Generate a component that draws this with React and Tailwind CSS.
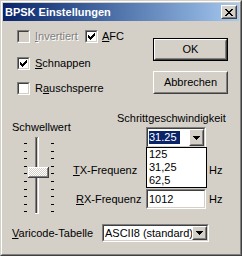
import { useState } from 'react'

const raisedOuter = 'border border-t-white border-l-white border-r-[#404040] border-b-[#404040]'
const raisedInner = 'border border-t-[#d4d0c8] border-l-[#d4d0c8] border-r-[#808080] border-b-[#808080]'
const sunkenOuter = 'border border-t-[#808080] border-l-[#808080] border-r-white border-b-white'
const sunkenInner = 'border border-t-[#404040] border-l-[#404040] border-r-[#d4d0c8] border-b-[#d4d0c8]'

function CheckMark() {
  return (
    <svg width="7" height="7" viewBox="0 0 7 7" shapeRendering="crispEdges">
      <path
        fill="#000"
        d="M6 0h1v1h-1z M5 1h2v1h-2z M0 2h1v1h-1z M4 2h3v1h-3z M0 3h2v1h-2z M3 3h3v1h-3z M0 4h5v1h-5z M1 5h3v1h-3z M2 6h1v1h-1z"
      />
    </svg>
  )
}

function Checkbox({ checked, disabled }) {
  return (
    <div className={`w-[13px] h-[13px] shrink-0 ${sunkenOuter}`}>
      <div className={`w-full h-full flex items-center justify-center ${sunkenInner} ${disabled ? 'bg-[#d4d0c8]' : 'bg-white'}`}>
        {checked && <CheckMark />}
      </div>
    </div>
  )
}

function Arrow() {
  return (
    <svg width="7" height="4" viewBox="0 0 7 4" shapeRendering="crispEdges">
      <path fill="#000" d="M0 0h7v1h-7z M1 1h5v1h-5z M2 2h3v1h-3z M3 3h1v1h-1z" />
    </svg>
  )
}

function Button({ label, isDefault }) {
  const body = (
    <div className={`w-full h-full ${raisedOuter}`}>
      <div className={`w-full h-full flex items-center justify-center ${raisedInner}`}>{label}</div>
    </div>
  )
  if (isDefault) {
    return <div className="w-[75px] h-[23px] border border-black">{body}</div>
  }
  return <div className="w-[75px] h-[23px]">{body}</div>
}

function Combo({ width, height, children, open, items }) {
  return (
    <div className={`relative ${width} ${height} ${sunkenOuter}`}>
      <div className={`w-full h-full flex bg-white ${sunkenInner}`}>
        <div className="flex-1 min-w-0 flex items-center pl-px whitespace-nowrap overflow-hidden">{children}</div>
        <div className={`w-[15px] shrink-0 h-full ${raisedOuter}`}>
          <div className={`w-full h-full flex items-center justify-center bg-[#d4d0c8] ${raisedInner}`}>
            <Arrow />
          </div>
        </div>
      </div>
      {open && (
        <div className="absolute left-[-1px] top-full w-[61px] border border-black bg-white">
          {items.map((it) => (
            <div key={it} className="h-[13px] leading-[13px] pl-[2px]">
              {it}
            </div>
          ))}
        </div>
      )}
    </div>
  )
}

function Field({ value }) {
  return (
    <div className={`w-[60px] h-[20px] ${sunkenOuter}`}>
      <div className={`w-full h-full bg-white flex items-center pl-px ${sunkenInner}`}>{value}</div>
    </div>
  )
}

function Slider() {
  const ticks = []
  for (let i = 0; i < 10; i++) ticks.push(Math.round(9 + i * 7.6))
  return (
    <svg width="40" height="82" viewBox="0 0 40 82" shapeRendering="crispEdges">
      <defs>
        <pattern id="dither" width="2" height="2" patternUnits="userSpaceOnUse">
          <rect width="2" height="2" fill="#d4d0c8" />
          <rect width="1" height="1" fill="#fff" />
          <rect x="1" y="1" width="1" height="1" fill="#fff" />
        </pattern>
      </defs>
      {ticks.map((y) => (
        <g key={y}>
          <rect x="4" y={y} width="3" height="1" fill="#000" />
          <rect x="31" y={y} width="3" height="1" fill="#000" />
        </g>
      ))}
      <rect x="15" y="3" width="1" height="77" fill="#808080" />
      <rect x="16" y="3" width="1" height="77" fill="#404040" />
      <rect x="17" y="3" width="1" height="77" fill="#d4d0c8" />
      <rect x="18" y="3" width="1" height="77" fill="#fff" />
      <rect x="15" y="3" width="3" height="1" fill="#808080" />
      <rect x="15" y="79" width="4" height="1" fill="#fff" />
      <rect x="8" y="33" width="21" height="11" fill="#404040" />
      <rect x="8" y="33" width="20" height="10" fill="#fff" />
      <rect x="9" y="34" width="19" height="9" fill="#808080" />
      <rect x="9" y="34" width="18" height="8" fill="url(#dither)" />
    </svg>
  )
}

export default function App() {
  const [speed] = useState('31.25')

  return (
    <div className="w-[242px] h-[256px] font-['Liberation_Sans',Arial,sans-serif] text-[11px] leading-[13px] text-black border border-t-[#d4d0c8] border-l-[#d4d0c8] border-r-[#404040] border-b-[#404040]">
      <div className="h-full flex flex-col p-px bg-[#d4d0c8] border border-t-white border-l-white border-r-[#808080] border-b-[#808080]">
        <div className="h-[18px] shrink-0 flex items-center pl-[2px] pr-[2px] bg-linear-to-r from-[#0a246a] to-[#a6caf0]">
          <span className="text-white font-bold text-[11px]">BPSK Einstellungen</span>
          <div className={`ml-auto w-[16px] h-[14px] ${raisedOuter}`}>
            <div className={`w-full h-full flex items-center justify-center bg-[#d4d0c8] ${raisedInner}`}>
              <svg width="8" height="7" viewBox="0 0 8 7" shapeRendering="crispEdges">
                <path
                  fill="#000"
                  d="M0 0h2v1h-2z M6 0h2v1h-2z M1 1h2v1h-2z M5 1h2v1h-2z M2 2h4v1h-4z M3 3h2v1h-2z M2 4h4v1h-4z M1 5h2v1h-2z M5 5h2v1h-2z M0 6h2v1h-2z M6 6h2v1h-2z"
                />
              </svg>
            </div>
          </div>
        </div>

        {/* checkboxes + buttons */}
        <div className="flex h-[89px] shrink-0">
          <div className="w-[150px] pl-[14px] pt-[9px]">
            <div className="flex items-center h-[13px]">
              <div className="w-[68px] flex items-center">
                <Checkbox disabled />
                <span className="ml-[5px] text-[#808080] [text-shadow:1px_1px_0_#fff]">
                  <u>I</u>nvertiert
                </span>
              </div>
              <Checkbox checked />
              <span className="ml-[4px]">
                <u>A</u>FC
              </span>
            </div>
            <div className="flex items-center h-[13px] mt-[14px]">
              <Checkbox checked />
              <span className="ml-[5px]">
                <u>S</u>chnappen
              </span>
            </div>
            <div className="flex items-center h-[13px] mt-[12px]">
              <Checkbox />
              <span className="ml-[5px]">
                R<u>a</u>uschsperre
              </span>
            </div>
          </div>
          <div className="pt-[17px] flex flex-col gap-[10px]">
            <Button label="OK" isDefault />
            <Button label="Abbrechen" />
          </div>
        </div>

        {/* slider + speed */}
        <div className="flex h-[108px] shrink-0">
          <div className="w-[70px] pl-[9px] pt-[11px]">
            <div>Schwellwert</div>
            <div className="ml-[8px]">
              <Slider />
            </div>
          </div>
          <div className="pt-[2px]">
            <div className="ml-[44px] w-[106px] text-center">Schrittgeschwindigkeit</div>
            <div className="ml-[73px] mt-[2px]">
              <Combo width="w-[60px]" height="h-[21px]" open items={['125', '31,25', '62,5']}>
                <span className="bg-[#0a246a] text-white pr-[3px]">{speed}</span>
              </Combo>
            </div>
            <div className="flex items-center mt-[12px]">
              <div className="w-[73px]">
                <u>T</u>X-Frequenz
              </div>
              <Field value="" />
              <span className="ml-[3px]">Hz</span>
            </div>
            <div className="flex items-center mt-[9px]">
              <div className="w-[73px] pl-[3px]">
                <u>R</u>X-Frequenz
              </div>
              <Field value="1012" />
              <span className="ml-[3px]">Hz</span>
            </div>
          </div>
        </div>

        {/* varicode */}
        <div className="flex items-center pl-[9px] pt-[6px]">
          <div className="w-[90px] whitespace-nowrap">
            <u>V</u>aricode-Tabelle
          </div>
          <Combo width="w-[107px]" height="h-[18px]">
            <span>ASCII8 (standard)</span>
          </Combo>
        </div>
      </div>
    </div>
  )
}
